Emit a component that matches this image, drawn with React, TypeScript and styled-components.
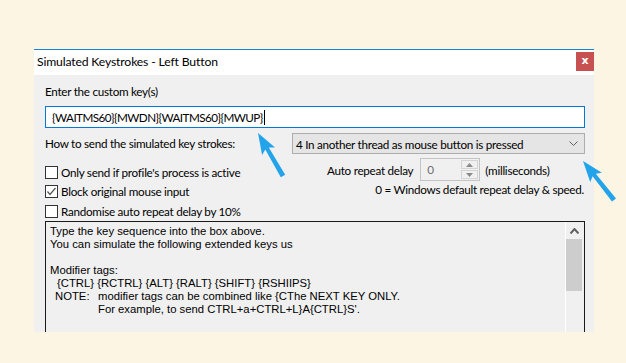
import React from "react";
import styled, { createGlobalStyle } from "styled-components";

const Global = createGlobalStyle`
  html, body { margin: 0; padding: 0; }
  body {
    background: #fdf5e3;
    width: 626px;
    height: 363px;
    overflow: hidden;
    font-family: Lato, "Liberation Sans", sans-serif;
    font-size: 11.7px;
    letter-spacing: -0.28px;
    color: #000;
  }
`;

const Page = styled.div`
  position: relative;
  width: 626px;
  height: 363px;
  padding: 49px 0 0 34px;
  box-sizing: border-box;
`;

const Dialog = styled.div`
  width: 560px;
  height: 283px;
  background: #f0f0f0;
  border-top: 1px solid #1883d7;
  box-sizing: border-box;
  overflow: hidden;
  display: flex;
  flex-direction: column;
`;

const TitleBar = styled.div`
  height: 25px;
  background: #fff;
  display: flex;
  align-items: flex-start;
  justify-content: space-between;
  flex-shrink: 0;
`;

const Title = styled.div`
  padding: 4px 0 0 3px;
  font-size: 12.2px;
  letter-spacing: -0.15px;
  line-height: 16px;
`;

const CloseBtn = styled.div`
  width: 18px;
  height: 19px;
  margin-top: 2px;
  background: #c75050;
  color: #fff;
  font-family: "DejaVu Sans", sans-serif;
  font-weight: bold;
  font-size: 11px;
  letter-spacing: 0;
  line-height: 17px;
  text-align: center;
`;

const Body = styled.div`
  padding: 9px 9px 0 11px;
  display: flex;
  flex-direction: column;
`;

const Label = styled.div`
  line-height: 15px;
  height: 15px;
  white-space: nowrap;
`;

const KeyInput = styled.div`
  margin-top: 7px;
  height: 22px;
  border: 1px solid #0078d7;
  background: #fff;
  box-sizing: border-box;
  padding: 0 0 0 6px;
  display: flex;
  align-items: center;
  white-space: nowrap;
  letter-spacing: -0.55px;
`;

const Caret = styled.span`
  display: inline-block;
  width: 1px;
  height: 15px;
  background: #000;
  margin-left: 1px;
`;

const SendRow = styled.div`
  margin-top: 5px;
  height: 21px;
  display: flex;
  align-items: center;
  justify-content: space-between;
`;

const Dropdown = styled.div`
  width: 293px;
  height: 21px;
  box-sizing: border-box;
  border: 1px solid #adadad;
  background: #e5e5e5;
  display: flex;
  align-items: center;
  justify-content: space-between;
  padding: 0 6px 0 3px;
  white-space: nowrap;
`;

const Middle = styled.div`
  display: flex;
  height: 67px;
  flex-shrink: 0;
`;

const LeftCol = styled.div`
  width: 282px;
  display: flex;
  flex-direction: column;
`;

const CheckRow = styled.div<{ $mt: number }>`
  margin-top: ${(p) => p.$mt}px;
  height: 18px;
  display: flex;
  align-items: center;
  gap: 3px;
  white-space: nowrap;
`;

const Box = styled.div`
  width: 13px;
  height: 13px;
  box-sizing: border-box;
  border: 1px solid #333;
  background: #fff;
  display: flex;
  align-items: center;
  justify-content: center;
`;

const RightCol = styled.div`
  flex: 1;
  display: flex;
  flex-direction: column;
`;

const SpinRow = styled.div`
  margin-top: 4px;
  height: 23px;
  display: flex;
  align-items: center;
  white-space: nowrap;
`;

const SpinBox = styled.div`
  margin-left: 7px;
  width: 60px;
  height: 23px;
  box-sizing: border-box;
  border: 1px solid #c4c4c4;
  background: #f0f0f0;
  display: flex;
  justify-content: space-between;
  padding: 1px 1px 1px 6px;
  color: #6d6d6d;
  line-height: 19px;
`;

const SpinButtons = styled.div`
  width: 17px;
  display: flex;
  flex-direction: column;
  gap: 1px;
`;

const SpinBtn = styled.div`
  flex: 1;
  border: 1px solid #d4d4d4;
  box-sizing: border-box;
  display: flex;
  align-items: center;
  justify-content: center;
`;

const Ms = styled.span`
  margin-left: 5px;
`;

const Note = styled.div`
  margin-top: 1px;
  text-align: right;
  padding-right: 1px;
  line-height: 15px;
  white-space: nowrap;
`;

const InfoBox = styled.div`
  height: 140px;
  border: 1px solid #1a1a1a;
  background: #f0f0f0;
  display: flex;
  flex-shrink: 0;
`;

const InfoText = styled.div`
  flex: 1;
  padding: 3px 0 0 4px;
  font-family: "Liberation Sans", Arial, sans-serif;
  font-size: 11.3px;
  line-height: 13px;
  letter-spacing: 0;
  white-space: pre;
  overflow: hidden;
`;

const Line = styled.div<{ $indent?: number }>`
  height: 13px;
  padding-left: ${(p) => p.$indent ?? 0}px;
  display: flex;
`;

const Tab = styled.span<{ $w: number }>`
  display: inline-block;
  width: ${(p) => p.$w}px;
`;

const ScrollBar = styled.div`
  width: 17px;
  margin-right: 1px;
  border-left: 1px solid #fff;
  display: flex;
  flex-direction: column;
  align-items: stretch;
`;

const ScrollArrow = styled.div`
  height: 17px;
  display: flex;
  align-items: center;
  justify-content: center;
`;

const Thumb = styled.div`
  height: 52px;
  background: #cdcdcd;
  margin-right: 1px;
`;

const Overlay = styled.svg`
  position: absolute;
  left: 0;
  top: 0;
  pointer-events: none;
`;

function arrowPoints(tx: number, ty: number, ex: number, ey: number) {
  const dx = ex - tx;
  const dy = ey - ty;
  const len = Math.hypot(dx, dy);
  const ux = dx / len;
  const uy = dy / len;
  const px = -uy;
  const py = ux;
  const headLen = 21;
  const headHalf = 7.5;
  const shaftHalf = 2;
  const tailHalf = 2.6;
  const at = (d: number, w: number) =>
    `${(tx + ux * d + px * w).toFixed(1)},${(ty + uy * d + py * w).toFixed(1)}`;
  return [
    at(0, 0),
    at(headLen, headHalf),
    at(headLen - 3, shaftHalf),
    at(len, tailHalf),
    at(len, -tailHalf),
    at(headLen - 3, -shaftHalf),
    at(headLen, -headHalf),
  ].join(" ");
}

export default function App() {
  return (
    <>
      <Global />
      <Page>
        <Dialog>
          <TitleBar>
            <Title>Simulated Keystrokes - Left Button</Title>
            <CloseBtn>x</CloseBtn>
          </TitleBar>
          <Body>
            <Label>Enter the custom key(s)</Label>
            <KeyInput>
              {"{WAITMS60}{MWDN}{WAITMS60}{MWUP}"}
              <Caret />
            </KeyInput>
            <SendRow>
              <Label>How to send the simulated key strokes:</Label>
              <Dropdown>
                <span>4 In another thread as mouse button is pressed</span>
                <svg width="9" height="6" viewBox="0 0 9 6">
                  <polyline points="0.5,0.5 4.5,4.5 8.5,0.5" fill="none" stroke="#606060" strokeWidth="1" />
                </svg>
              </Dropdown>
            </SendRow>
            <Middle>
              <LeftCol>
                <CheckRow $mt={9}>
                  <Box />
                  <span>Only send if profile's process is active</span>
                </CheckRow>
                <CheckRow $mt={1}>
                  <Box>
                    <svg width="11" height="11" viewBox="0 0 11 11">
                      <polyline points="1.5,5.5 4,8.5 9.5,2" fill="none" stroke="#555" strokeWidth="1.2" />
                    </svg>
                  </Box>
                  <span>Block original mouse input</span>
                </CheckRow>
                <CheckRow $mt={2}>
                  <Box />
                  <span>Randomise auto repeat delay by 10%</span>
                </CheckRow>
              </LeftCol>
              <RightCol>
                <SpinRow>
                  <span>Auto repeat delay</span>
                  <SpinBox>
                    <span>0</span>
                    <SpinButtons>
                      <SpinBtn>
                        <svg width="7" height="4" viewBox="0 0 7 4">
                          <polygon points="0,4 3.5,0 7,4" fill="#8a8a8a" />
                        </svg>
                      </SpinBtn>
                      <SpinBtn>
                        <svg width="7" height="4" viewBox="0 0 7 4">
                          <polygon points="0,0 3.5,4 7,0" fill="#8a8a8a" />
                        </svg>
                      </SpinBtn>
                    </SpinButtons>
                  </SpinBox>
                  <Ms>(milliseconds)</Ms>
                </SpinRow>
                <Note>0 = Windows default repeat delay &amp; speed.</Note>
              </RightCol>
            </Middle>
            <InfoBox>
              <InfoText>
                <Line>Type the key sequence into the box above.</Line>
                <Line>You can simulate the following extended keys us</Line>
                <Line />
                <Line>Modifier tags:</Line>
                <Line $indent={7}>{"{CTRL} {RCTRL} {ALT} {RALT} {SHIFT} {RSHIIPS}"}</Line>
                <Line $indent={5}>
                  <Tab $w={43}>NOTE:</Tab>
                  <span>{"modifier tags can be combined like {CThe NEXT KEY ONLY."}</span>
                </Line>
                <Line $indent={48}>{"For example, to send CTRL+a+CTRL+L}A{CTRL}S'."}</Line>
              </InfoText>
              <ScrollBar>
                <ScrollArrow>
                  <svg width="9" height="6" viewBox="0 0 9 6">
                    <polyline points="0.5,5.5 4.5,1 8.5,5.5" fill="none" stroke="#606060" strokeWidth="2" />
                  </svg>
                </ScrollArrow>
                <Thumb />
              </ScrollBar>
            </InfoBox>
          </Body>
        </Dialog>
        <Overlay width="626" height="363" viewBox="0 0 626 363">
          <polygon points={arrowPoints(258, 133, 283, 176)} fill="#22a3ea" />
          <polygon points={arrowPoints(583, 161, 614, 200)} fill="#22a3ea" />
        </Overlay>
      </Page>
    </>
  );
}
